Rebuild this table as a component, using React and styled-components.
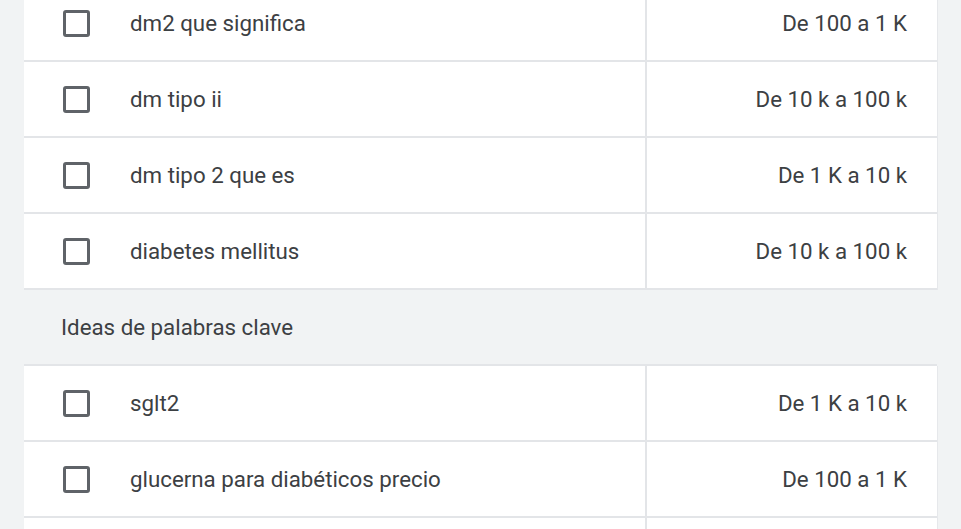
import React from "react";
import styled, { createGlobalStyle } from "styled-components";

const Global = createGlobalStyle`
  html, body { margin: 0; padding: 0; background: #f1f3f4; overflow: hidden; }
  body { font-family: Roboto, "Noto Sans", Arial, sans-serif; }
`;

const Page = styled.div`
  padding: 0 24px;
  margin-top: -14px;
`;

const List = styled.div`
  display: flex;
  flex-direction: column;
`;

const Row = styled.div`
  display: grid;
  grid-template-columns: 623px 1fr;
  height: 76px;
  box-sizing: border-box;
  background: #ffffff;
  border-bottom: 2px solid #e3e5e8;
  box-shadow: 1px 0 0 #e6e8eb;
`;

const MainCell = styled.div`
  display: flex;
  align-items: center;
  border-right: 2px solid #e3e5e8;
  padding-left: 39px;
`;

const Checkbox = styled.span`
  width: 21px;
  height: 21px;
  border: 3px solid #5f6368;
  border-radius: 3px;
  flex: none;
`;

const Label = styled.span`
  margin-left: 40px;
  font-size: 22.3px;
  color: #3c4043;
`;

const RangeCell = styled.div`
  display: flex;
  align-items: center;
  justify-content: flex-end;
  padding-right: 30px;
  font-size: 22.3px;
  color: #3c4043;
`;

const SectionHeader = styled.div`
  height: 76px;
  box-sizing: border-box;
  display: flex;
  align-items: center;
  padding-left: 37px;
  background: #f1f3f4;
  border-bottom: 2px solid #e3e5e8;
  font-size: 22.3px;
  color: #3c4043;
`;

const groups = [
  {
    header: null,
    rows: [
      ["dm2 que significa", "De 100 a 1 K"],
      ["dm tipo ii", "De 10 k a 100 k"],
      ["dm tipo 2 que es", "De 1 K a 10 k"],
      ["diabetes mellitus", "De 10 k a 100 k"],
    ],
  },
  {
    header: "Ideas de palabras clave",
    rows: [
      ["sglt2", "De 1 K a 10 k"],
      ["glucerna para diabéticos precio", "De 100 a 1 K"],
      ["", ""],
    ],
  },
];

export default function App() {
  return (
    <>
      <Global />
      <Page>
        <List>
          {groups.map((g, gi) => (
            <React.Fragment key={gi}>
              {g.header && <SectionHeader>{g.header}</SectionHeader>}
              {g.rows.map(([k, r], i) => (
                <Row key={i}>
                  <MainCell>
                    <Checkbox />
                    <Label>{k}</Label>
                  </MainCell>
                  <RangeCell>{r}</RangeCell>
                </Row>
              ))}
            </React.Fragment>
          ))}
        </List>
      </Page>
    </>
  );
}
